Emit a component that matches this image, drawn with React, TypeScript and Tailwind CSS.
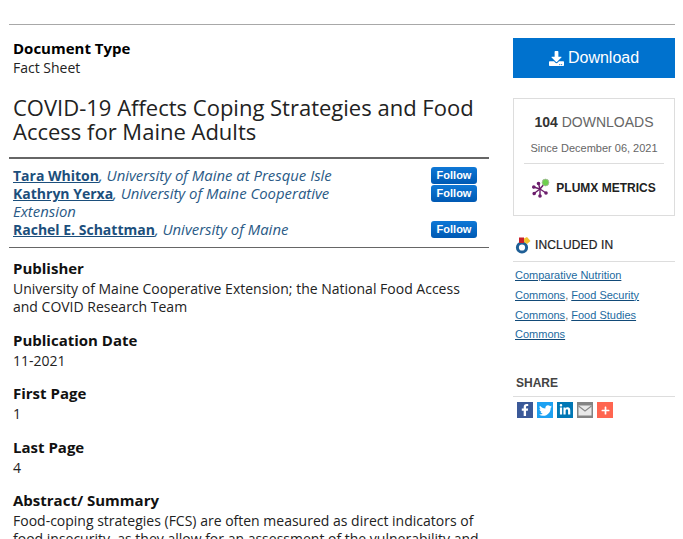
import { FaDownload, FaFacebookF, FaTwitter, FaLinkedinIn, FaPlus } from "react-icons/fa";

const authors = [
    { name: "Tara Whiton", org: "University of Maine at Presque Isle", wrap: false },
    { name: "Kathryn Yerxa", org: "University of Maine Cooperative Extension", wrap: true },
    { name: "Rachel E. Schattman", org: "University of Maine", wrap: false },
];

const fields = [
    { label: "Publisher", value: "University of Maine Cooperative Extension; the National Food Access and COVID Research Team" },
    { label: "Publication Date", value: "11-2021" },
    { label: "First Page", value: "1" },
    { label: "Last Page", value: "4" },
    {
        label: "Abstract/ Summary",
        value: "Food-coping strategies (FCS) are often measured as direct indicators of food insecurity, as they allow for an assessment of the vulnerability and",
    },
];

function PlumxIcon() {
    return (
        <svg width="19" height="20" viewBox="0 0 19 20" className="shrink-0">
            <g stroke="#6b1d6b" strokeWidth="1.4" fill="#6b1d6b">
                <line x1="8" y1="11" x2="1.5" y2="9" />
                <line x1="8" y1="11" x2="2" y2="15.5" />
                <line x1="8" y1="11" x2="8" y2="18" />
                <line x1="8" y1="11" x2="14" y2="15" />
                <line x1="8" y1="11" x2="6.5" y2="5.5" />
                <line x1="8" y1="11" x2="13" y2="5" />
                <circle cx="1.8" cy="9" r="1.1" />
                <circle cx="2.2" cy="15.5" r="1.1" />
                <circle cx="8" cy="18" r="1.1" />
                <circle cx="14" cy="15" r="1.1" />
                <circle cx="6.5" cy="5.5" r="1.1" />
            </g>
            <circle cx="13.5" cy="4.5" r="3.4" fill="#6fd04f" stroke="#a8b8a0" strokeWidth="0.8" />
        </svg>
    );
}

function CommonsIcon() {
    return (
        <svg width="17" height="17" viewBox="0 0 17 17" className="shrink-0">
            <circle cx="7" cy="10.5" r="4.6" fill="none" stroke="#1f5f96" strokeWidth="3" />
            <rect x="4" y="0.5" width="5" height="5.5" fill="#c8202a" />
            <polygon points="9,1.5 12,0 15.5,4 12,7 9,5" fill="#f2c230" />
        </svg>
    );
}

function MailIcon() {
    return (
        <svg width="14" height="11" viewBox="0 0 14 11">
            <rect x="0.5" y="0.5" width="13" height="10" fill="#e9e9e9" />
            <path d="M0.5 1 L7 6 L13.5 1" fill="none" stroke="#8a8a8a" strokeWidth="1.1" />
        </svg>
    );
}

export default function App() {
    return (
        <div className="h-[539px] w-[683px] overflow-hidden bg-white pt-[24px] pl-[9px]">
            <div className="w-[666px] border-t border-[#a8a8a8] flex justify-between">
                <main className="w-[480px] pt-[12px] font-['Open_Sans',sans-serif] text-[#111]">
                    <div className="pl-[4px]">
                        <h4 className="text-[15px] leading-[22px] font-bold text-black">Document Type</h4>
                        <p className="text-[14px] leading-[18px] text-[#222]">Fact Sheet</p>
                        <h1 className="mt-[18px] text-[22px] leading-[24px] text-[#222] w-[470px]">
                            COVID-19 Affects Coping Strategies and Food Access for Maine Adults
                        </h1>
                    </div>

                    <div className="mt-[14px] border-t-2 border-b border-t-[#666] border-b-[#666] pt-[7px] pb-[9px] pl-[4px] pr-[12px]">
                        {authors.map((a) => (
                            <div key={a.name} className="flex justify-between items-start">
                                <p className={`text-[14.9px] leading-[18px] text-[#2a5a86] italic ${a.wrap ? "w-[340px]" : ""}`}>
                                    <a href="#" className="text-[14px] leading-[10px] font-bold not-italic underline text-[#1c4f7c]">{a.name}</a>, {a.org}
                                </p>
                                <button className="mt-[1px] w-[46px] h-[17px] rounded-[3px] bg-gradient-to-b from-[#0f78d6] to-[#0059b3] text-white font-['Liberation_Sans',sans-serif] text-[11px] leading-[15px] font-bold pb-[1px]">
                                    Follow
                                </button>
                            </div>
                        ))}
                    </div>

                    <div className="pl-[4px] mt-[9px]">
                        {fields.map((f) => (
                            <div key={f.label} className="mb-[12.5px]">
                                <h4 className="text-[15px] leading-[22px] font-bold text-[#111]">{f.label}</h4>
                                <p className="mt-[1px] text-[14px] leading-[18px] text-[#222] w-[468px]">{f.value}</p>
                            </div>
                        ))}
                    </div>
                </main>

                <aside className="w-[162px] pt-[13px] font-['Liberation_Sans',sans-serif]">
                    <a href="#" className="h-[40px] bg-[#0072ce] text-white flex items-center justify-center gap-[4px] text-[16px]">
                        <FaDownload size={15} />
                        Download
                    </a>

                    <div className="mt-[20px] h-[118px] border border-[#ddd] px-[10px] pt-[14px]">
                        <p className="text-center text-[14px] leading-[18px] text-[#666]">
                            <b className="text-[#333]">104</b> DOWNLOADS
                        </p>
                        <p className="mt-[10px] pb-[7px] text-center text-[11px] leading-[15px] text-[#666] border-b border-[#ddd]">
                            Since December 06, 2021
                        </p>
                        <div className="mt-[14px] flex items-center justify-center gap-[5px]">
                            <PlumxIcon />
                            <span className="text-[12px] font-bold text-[#222]">PLUMX METRICS</span>
                        </div>
                    </div>

                    <div className="mt-[21px] flex items-center gap-[3px] pb-[7px] pl-[2px] border-b border-[#ddd]">
                        <CommonsIcon />
                        <span className="text-[12px] leading-[17px] tracking-[0.15px] text-[#222] [-webkit-text-stroke:0.2px_#222]">INCLUDED IN</span>
                    </div>
                    <p className="mt-[4px] pl-[2px] w-[135px] text-[11px] leading-[19.8px] text-[#666]">
                        <a href="#" className="text-[#1c6aa0] underline decoration-[#124a78]">Comparative Nutrition Commons</a>,{" "}
                        <a href="#" className="text-[#1c6aa0] underline decoration-[#124a78]">Food Security Commons</a>,{" "}
                        <a href="#" className="text-[#1c6aa0] underline decoration-[#124a78]">Food Studies Commons</a>
                    </p>

                    <h5 className="mt-[31px] pl-[3px] pb-[6px] text-[12px] leading-[14px] font-bold text-[#444] border-b border-[#ddd]">SHARE</h5>
                    <div className="mt-[5px] pl-[4px] flex gap-[4px]">
                        <span className="w-[16px] h-[16px] bg-[#3b5998] text-white flex items-center justify-center"><FaFacebookF size={12} /></span>
                        <span className="w-[16px] h-[16px] bg-[#1da1f2] text-white flex items-center justify-center"><FaTwitter size={13} /></span>
                        <span className="w-[16px] h-[16px] bg-[#0077b5] text-white flex items-center justify-center"><FaLinkedinIn size={12} /></span>
                        <span className="w-[16px] h-[16px] bg-[#848484] flex items-center justify-center"><MailIcon /></span>
                        <span className="w-[16px] h-[16px] bg-[#ff6550] text-white flex items-center justify-center"><FaPlus size={9} /></span>
                    </div>
                </aside>
            </div>
        </div>
    );
}
